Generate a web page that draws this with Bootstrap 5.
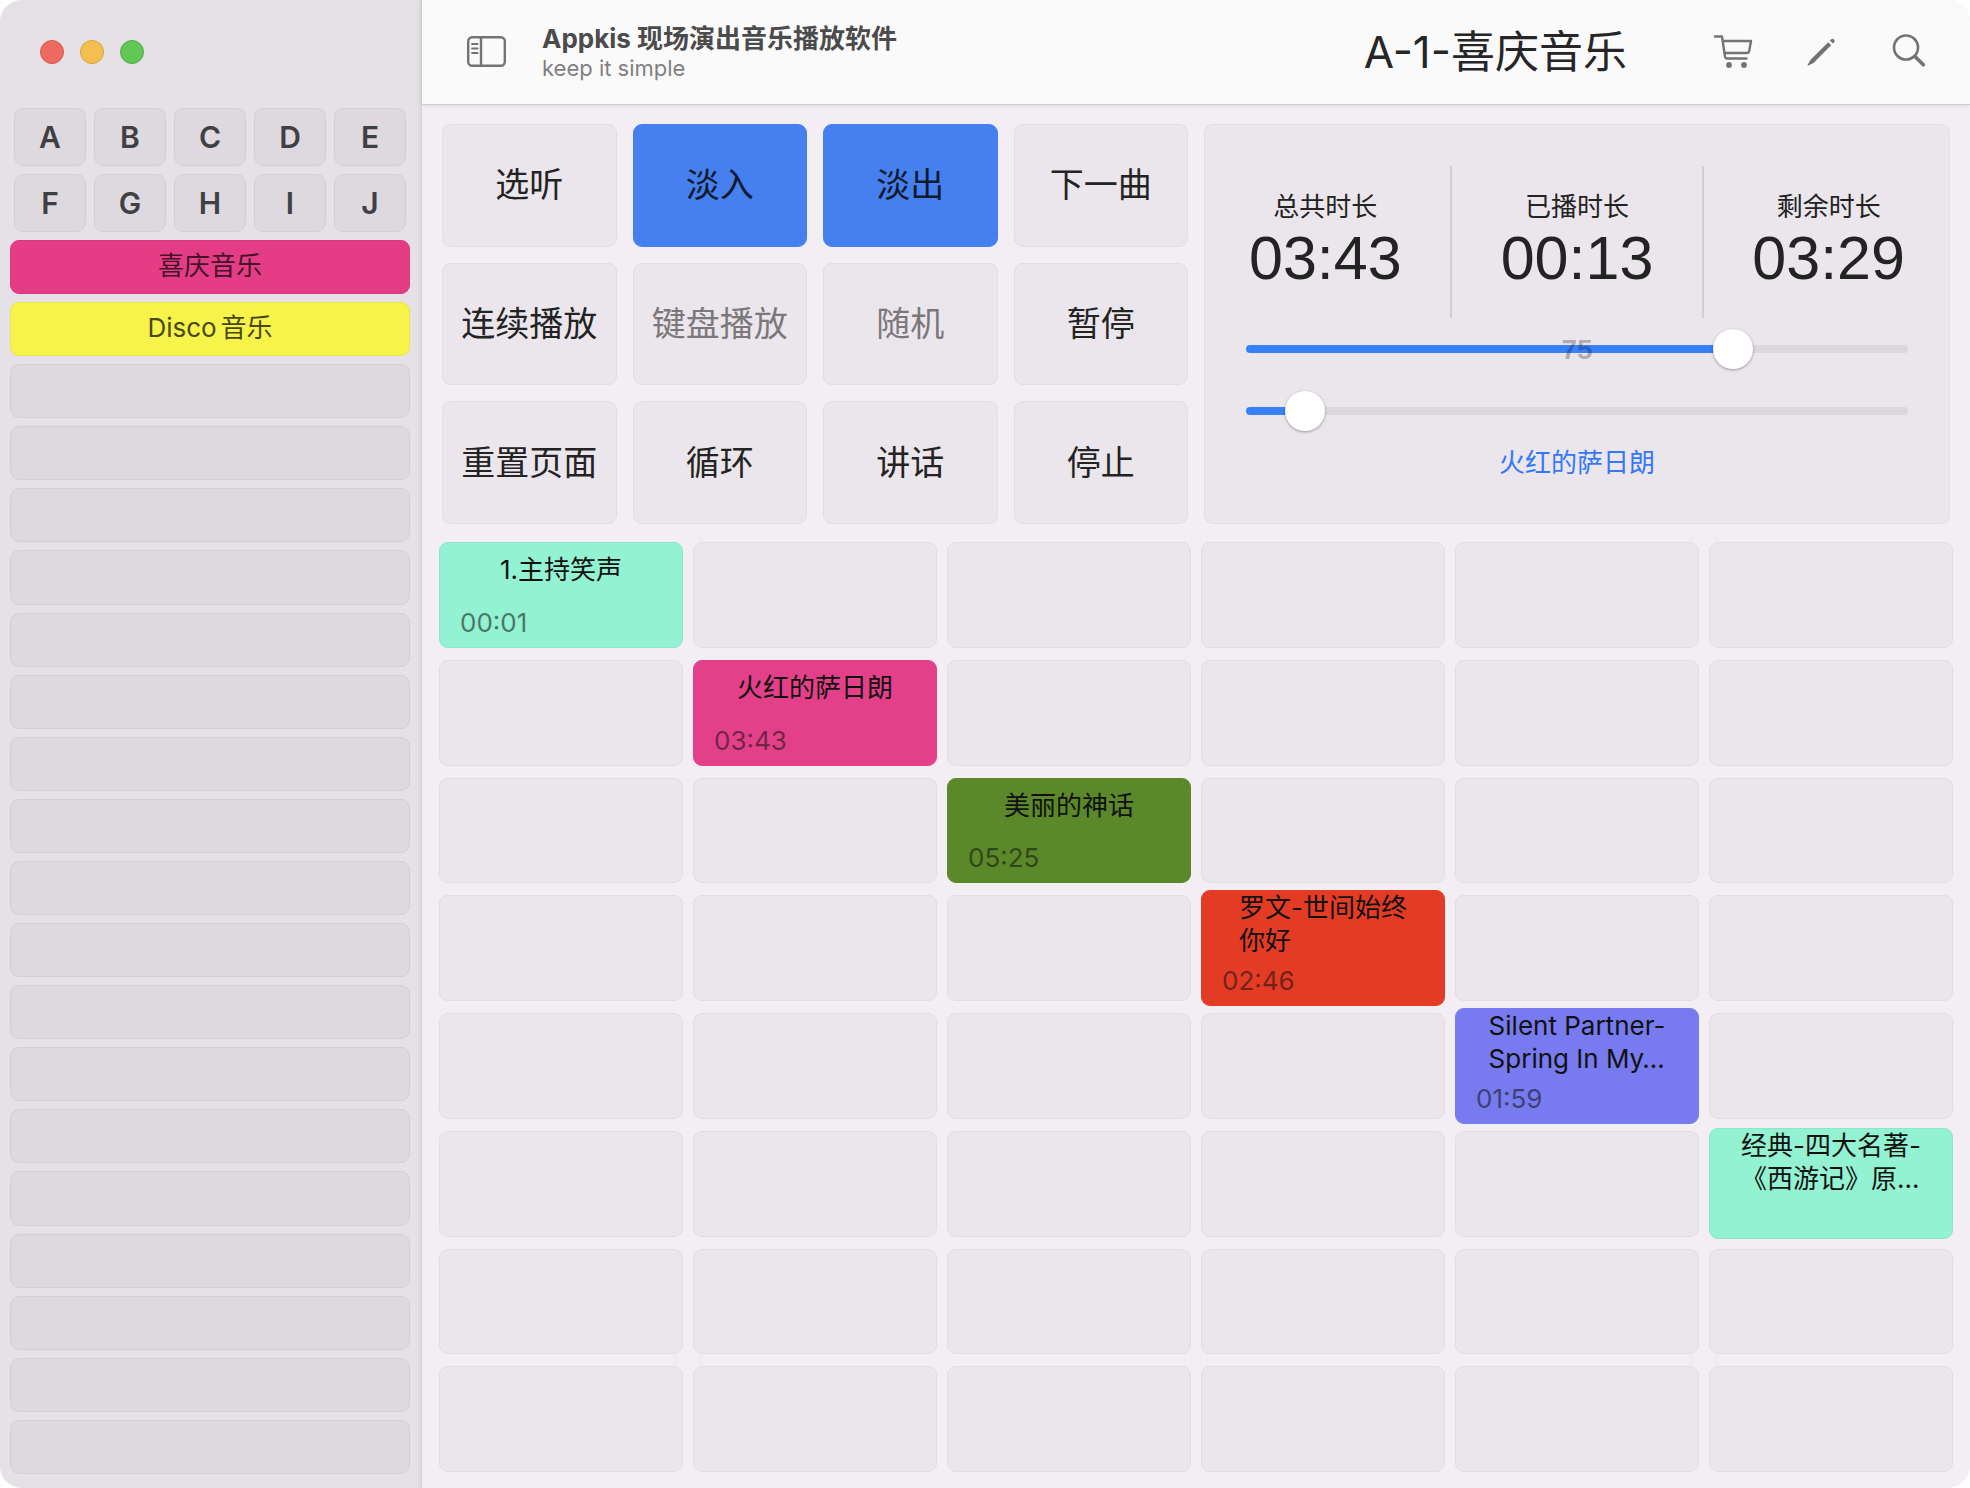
<!DOCTYPE html>
<html lang="zh-CN">
<head>
<meta charset="utf-8">
<meta name="viewport" content="width=device-width, initial-scale=1">
<title>Appkis 现场演出音乐播放软件</title>
<link href="https://cdn.jsdelivr.net/npm/bootstrap@5.3.0/dist/css/bootstrap.min.css" rel="stylesheet">
<style>
  body { font-family: Inter, "Noto Sans CJK SC", sans-serif; font-size: 26px; line-height: 33px; color: #232323; background: #fff; }
  .app-window { border-radius: 22px; background: #f3eef4; box-shadow: inset 0 1px 0 #f4f2f5; }
  button { font: inherit; color: inherit; padding: 0; }

  /* Sidebar */
  .side-pane { flex: 0 0 422px; background: #e5e1e7; border-right: 1px solid #d6d1d8; box-shadow: inset -6px 0 6px -6px rgba(0,0,0,.08); padding: 40px 11px 14px 10px; }
  .light { width: 24px; height: 24px; border-radius: 50%; border: 1px solid; }
  .light-close { background: #ed6b60; border-color: #d5574c; }
  .light-min { background: #f5bf4f; border-color: #d8a13d; }
  .light-max { background: #62c655; border-color: #53aa42; }
  .lights { padding-left: 30px; gap: 16px; height: 68px; }
  .bank-grid { display: grid; grid-template-columns: repeat(5, 1fr); gap: 8px; padding: 0 4px; }
  .side-btn { background: #ddd9df; border: 1px solid #d3cfd5; border-radius: 9px; }
  .bank { height: 58px; font-size: 30px; font-weight: 600; color: #404042; }
  .page-list { gap: 8px; margin-top: 8px; }
  .page-item { flex: 1 1 44px; min-height: 44px; line-height: 30px; padding-bottom: 2px; }
  .page-pink { background: #e43d86; border-color: #d93a7f; color: #441228; }
  .page-yellow { background: #f6f44a; border-color: #e9e746; color: #4a4916; }

  /* Title bar */
  .title-bar { height: 105px; background: #fbfafb; border-bottom: 1px solid #cfcad0; box-shadow: 0 1px 4px rgba(0,0,0,.09); padding: 0 41px 0 44px; color: #737373; }
  .icon-btn { width: 40px; height: 40px; border: 0; background: none; }
  .app-name { font-weight: 700; color: #4b4b4b; line-height: 32px; margin: 0; font-size: 26px; }
  .app-sub { font-size: 22px; line-height: 26px; color: #808080; }
  .app-id { margin-left: 36px; }
  .set-title { font-size: 44px; line-height: 56px; color: #262626; margin-right: 86px; }
  .icon-row { gap: 48px; }

  /* Deck */
  .deck { display: grid; grid-template-columns: 1fr 1fr; gap: 16px; padding: 19px 20px 0; }
  .pads { display: grid; grid-template-columns: repeat(4, 1fr); grid-template-rows: repeat(3, 1fr); gap: 16px; }
  .pane { background: #ebe6eb; border: 1px solid #e2dde3; border-radius: 9px; }
  .pad { font-size: 34px; line-height: 44px; white-space: nowrap; }
  .pad-on { background: #4580ee; border-color: #4580ee; color: #0d1a30; }
  .pad:disabled { color: #7b787b; }
  .monitor { height: 400px; padding: 41px 41px 0; }
  .rule { width: 2px; background: #d2cdd3; height: 152px; }
  .clock { font-family: "Liberation Sans", Arial, sans-serif; font-size: 61px; line-height: 70px; }
  .clock-row { padding: 0 3px; }
  .clock-box { padding-top: 24px; }
  .slider-box { height: 62px; }
  .slider { appearance: none; -webkit-appearance: none; display: block; width: 100%; height: 62px; margin: 0; background: none; }
  .slider::-webkit-slider-runnable-track { height: 8px; border-radius: 4px;
    background: linear-gradient(#3880f7, #3880f7) 0 0 / calc(20px + (100% - 40px) * var(--at)) 100% no-repeat #dcd7dd; }
  .slider::-webkit-slider-thumb { -webkit-appearance: none; width: 40px; height: 40px; margin-top: -16px; border-radius: 50%; background: #fff; box-shadow: 0 1px 3px rgba(0,0,0,.35); }
  .volume-mark { font-family: "Liberation Sans", Arial, sans-serif; font-size: 28px; font-weight: 700; color: rgba(0,0,0,.27); pointer-events: none; }
  .now-playing { color: #3478f6; margin-top: 4px; }

  /* Tracks */
  .track-grid { display: grid; grid-template-columns: repeat(6, minmax(0, 1fr)); grid-template-rows: repeat(8, minmax(0, 1fr)); gap: 12px 10px; padding: 18px 17px 16px; }
  .track { display: flex; flex-direction: column; align-self: center; min-height: 100%; }
  .song { justify-content: space-between; gap: 8px; padding: 10px 0 8px; color: #111; }
  .song-name { align-self: center; text-align: left; white-space: nowrap; }
  .song-time { align-self: flex-start; padding-left: 20px; line-height: 32px; opacity: .55; }
  /* Two-line titles are taller than a row and spill evenly into the gaps */
  .song-tall { padding-top: 0; margin: -6px 0; z-index: 1; }
  .song-untimed { padding-bottom: 43px; }
  .song-mint { background: #92f2d1; border-color: #8be7c7; }
  .song-pink { background: #e44089; border-color: #e44089; }
  .song-green { background: #5b8828; border-color: #5b8828; }
  .song-red { background: #e43c24; border-color: #e43c24; }
  .song-violet { background: #777bef; border-color: #777bef; }
</style>
</head>
<body>
<div class="app-window d-flex min-vh-100 overflow-hidden">
  <aside class="side-pane d-flex flex-column">
    <div class="lights d-flex">
      <button class="light light-close" aria-label="关闭"></button>
      <button class="light light-min" aria-label="最小化"></button>
      <button class="light light-max" aria-label="缩放"></button>
    </div>
    <div class="bank-grid">
      <button class="side-btn bank">A</button><button class="side-btn bank">B</button><button class="side-btn bank">C</button><button class="side-btn bank">D</button><button class="side-btn bank">E</button>
      <button class="side-btn bank">F</button><button class="side-btn bank">G</button><button class="side-btn bank">H</button><button class="side-btn bank">I</button><button class="side-btn bank">J</button>
    </div>
    <div class="page-list d-flex flex-column flex-grow-1">
      <button class="side-btn page-item page-pink">喜庆音乐</button>
      <button class="side-btn page-item page-yellow"><span class="me-1">Disco</span>音乐</button>
      <button class="side-btn page-item"></button><button class="side-btn page-item"></button><button class="side-btn page-item"></button>
      <button class="side-btn page-item"></button><button class="side-btn page-item"></button><button class="side-btn page-item"></button>
      <button class="side-btn page-item"></button><button class="side-btn page-item"></button><button class="side-btn page-item"></button>
      <button class="side-btn page-item"></button><button class="side-btn page-item"></button><button class="side-btn page-item"></button>
      <button class="side-btn page-item"></button><button class="side-btn page-item"></button><button class="side-btn page-item"></button>
      <button class="side-btn page-item"></button><button class="side-btn page-item"></button><button class="side-btn page-item"></button>
    </div>
  </aside>

  <main class="d-flex flex-column flex-grow-1">
    <header class="title-bar d-flex align-items-center">
      <button class="icon-btn" aria-label="边栏">
        <svg class="d-block" width="40" height="40" viewBox="0 0 40 40" fill="none" stroke="currentColor" stroke-width="2.4"><rect x="2.2" y="5.2" width="36.6" height="28.6" rx="4"/><path d="M15 5v29"/><path d="M6 12h5.600M6 16.500h5.600M6 21h5.600" stroke-width="1.800" stroke-linecap="round"/></svg>
      </button>
      <div class="app-id me-auto">
        <h1 class="app-name">Appkis 现场演出音乐播放软件</h1>
        <div class="app-sub">keep it simple</div>
      </div>
      <div class="set-title">A-1-喜庆音乐</div>
      <div class="icon-row d-flex">
        <button class="icon-btn" aria-label="商店">
          <svg class="d-block" width="40" height="40" viewBox="0 0 40 40" fill="none" stroke="currentColor" stroke-width="2.4" stroke-linecap="round" stroke-linejoin="round"><path d="M2 4.500h7L12 24.500q.4 2 2.300 2H33.500"/><path d="M10 9h28l-1.800 10q-.4 2-2.400 2H11.500"/><g fill="currentColor" stroke="none"><circle cx="16" cy="33" r="2.900"/><circle cx="31" cy="33" r="2.900"/></g></svg>
        </button>
        <button class="icon-btn" aria-label="编辑">
          <svg class="d-block" width="40" height="40" viewBox="0 0 40 40" fill="currentColor"><path d="M27.200 10.200l3 3L12.500 31l-5.200 2.600q-1 .3-.7-.7L9.300 28z"/><path d="M28.900 8.600l1.300-1.300q1.400-1.100 2.800.2t.2 2.800l-1.300 1.300z"/></svg>
        </button>
        <button class="icon-btn" aria-label="搜索">
          <svg class="d-block" width="40" height="40" viewBox="0 0 40 40" fill="none" stroke="currentColor" stroke-linecap="round"><circle cx="17" cy="15.500" r="12" stroke-width="2.600"/><path d="M26 24.500l8.300 8.300" stroke-width="3.600"/></svg>
        </button>
      </div>
    </header>

    <section class="deck">
      <div class="pads">
        <button class="pane pad">选听</button><button class="pane pad pad-on">淡入</button><button class="pane pad pad-on">淡出</button><button class="pane pad">下一曲</button>
        <button class="pane pad">连续播放</button><button class="pane pad" disabled>键盘播放</button><button class="pane pad" disabled>随机</button><button class="pane pad">暂停</button>
        <button class="pane pad">重置页面</button><button class="pane pad">循环</button><button class="pane pad">讲话</button><button class="pane pad">停止</button>
      </div>
      <div class="pane monitor">
        <div class="clock-row d-flex justify-content-between text-center">
          <div class="clock-box"><div>总共时长</div><div class="clock">03:43</div></div>
          <div class="rule"></div>
          <div class="clock-box"><div>已播时长</div><div class="clock">00:13</div></div>
          <div class="rule"></div>
          <div class="clock-box"><div>剩余时长</div><div class="clock">03:29</div></div>
        </div>
        <div class="slider-box position-relative">
          <input class="slider" id="volume" type="range" min="0" max="100" value="75" aria-label="音量" style="--at:.75">
          <output class="volume-mark position-absolute top-50 start-50 translate-middle" for="volume">75</output>
        </div>
        <div class="slider-box">
          <input class="slider" id="progress" type="range" min="0" max="223" value="14" aria-label="播放进度" style="--at:.063">
        </div>
        <div class="now-playing text-center">火红的萨日朗</div>
      </div>
    </section>

    <section class="track-grid flex-grow-1">
      <button class="pane track song song-mint"><span class="song-name">1.主持笑声</span><span class="song-time">00:01</span></button>
      <button class="pane track"></button><button class="pane track"></button><button class="pane track"></button><button class="pane track"></button><button class="pane track"></button>

      <button class="pane track"></button>
      <button class="pane track song song-pink"><span class="song-name">火红的萨日朗</span><span class="song-time">03:43</span></button>
      <button class="pane track"></button><button class="pane track"></button><button class="pane track"></button><button class="pane track"></button>

      <button class="pane track"></button><button class="pane track"></button>
      <button class="pane track song song-green"><span class="song-name">美丽的神话</span><span class="song-time">05:25</span></button>
      <button class="pane track"></button><button class="pane track"></button><button class="pane track"></button>

      <button class="pane track"></button><button class="pane track"></button><button class="pane track"></button>
      <button class="pane track song song-tall song-red"><span class="song-name">罗文-世间始终<br>你好</span><span class="song-time">02:46</span></button>
      <button class="pane track"></button><button class="pane track"></button>

      <button class="pane track"></button><button class="pane track"></button><button class="pane track"></button><button class="pane track"></button>
      <button class="pane track song song-tall song-violet"><span class="song-name">Silent Partner-<br>Spring In My…</span><span class="song-time">01:59</span></button>
      <button class="pane track"></button>

      <button class="pane track"></button><button class="pane track"></button><button class="pane track"></button><button class="pane track"></button><button class="pane track"></button>
      <button class="pane track song song-tall song-untimed song-mint"><span class="song-name">经典-四大名著-<br>《西游记》原…</span></button>

      <button class="pane track"></button><button class="pane track"></button><button class="pane track"></button><button class="pane track"></button><button class="pane track"></button><button class="pane track"></button>

      <button class="pane track"></button><button class="pane track"></button><button class="pane track"></button><button class="pane track"></button><button class="pane track"></button><button class="pane track"></button>
    </section>
  </main>
</div>
<script src="https://cdn.jsdelivr.net/npm/bootstrap@5.3.0/dist/js/bootstrap.bundle.min.js"></script>
</body>
</html>
